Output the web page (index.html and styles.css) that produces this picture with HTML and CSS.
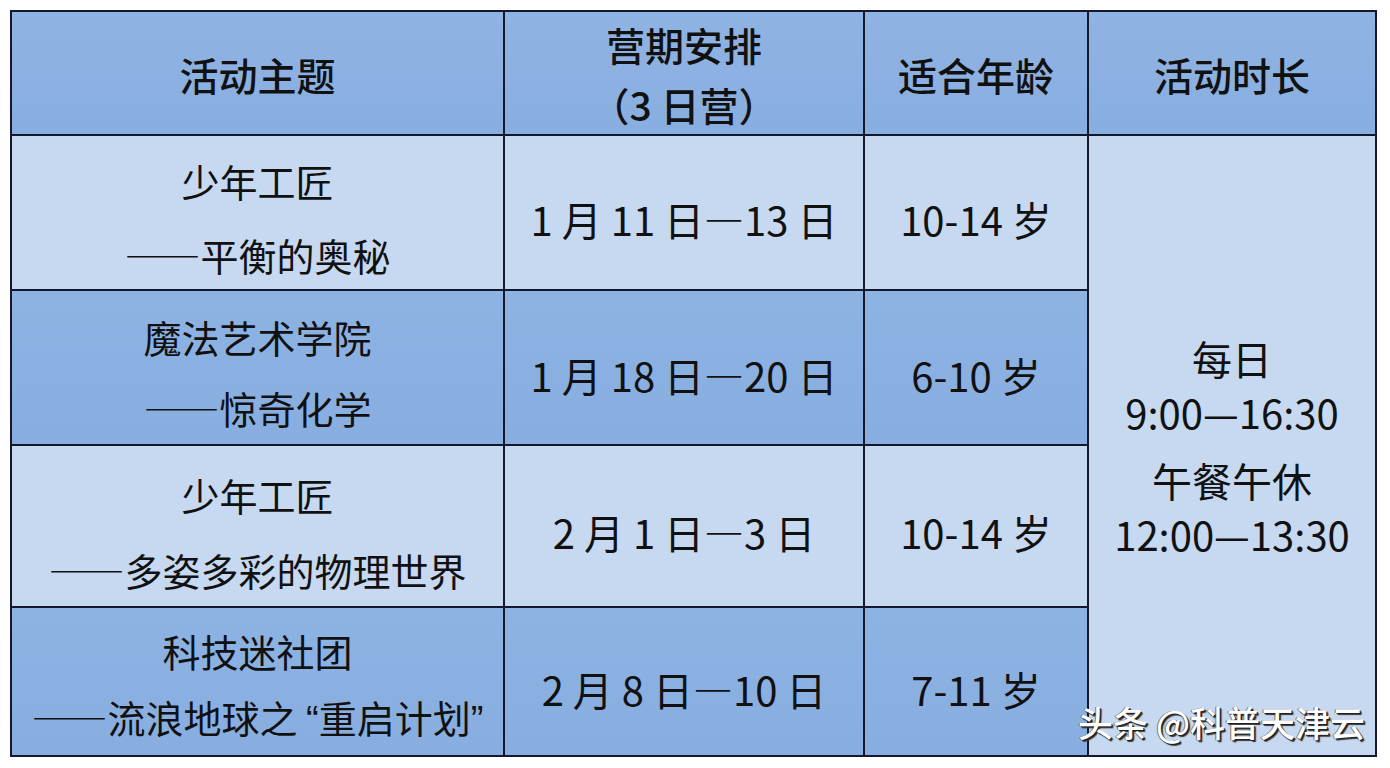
FILE: index.html
```html
<!DOCTYPE html>
<html lang="zh-CN">
<head>
<meta charset="utf-8">
<title>活动安排</title>
<link rel="stylesheet" href="styles.css">
</head>
<body>
<div class="wrap">
  <table class="schedule">
    <colgroup>
      <col class="c1"><col class="c2"><col class="c3"><col class="c4">
    </colgroup>
    <tr class="head">
      <th>活动主题</th>
      <th><div class="hl">营期安排</div><div class="hl">（3 日营）</div></th>
      <th>适合年龄</th>
      <th>活动时长</th>
    </tr>
    <tr class="r1 light">
      <td class="topic"><div>少年工匠</div><div>——平衡的奥秘</div></td>
      <td class="num">1 月 11 日—13 日</td>
      <td class="num">10-14 岁</td>
      <td class="time" rowspan="4">
        <div class="tgroup"><div>每日</div><div>9:00—16:30</div></div>
        <div class="tgroup"><div>午餐午休</div><div>12:00—13:30</div></div>
      </td>
    </tr>
    <tr class="r2 dark">
      <td class="topic"><div>魔法艺术学院</div><div>——惊奇化学</div></td>
      <td class="num">1 月 18 日—20 日</td>
      <td class="num">6-10 岁</td>
    </tr>
    <tr class="r3 light">
      <td class="topic"><div>少年工匠</div><div>——多姿多彩的物理世界</div></td>
      <td class="num">2 月 1 日—3 日</td>
      <td class="num">10-14 岁</td>
    </tr>
    <tr class="r4 dark">
      <td class="topic"><div>科技迷社团</div><div>——流浪地球之 <span class="q">“</span>重启计划<span class="q">”</span></div></td>
      <td class="num">2 月 8 日—10 日</td>
      <td class="num">7-11 岁</td>
    </tr>
  </table>
  <div class="watermark">头条 @科普天津云</div>
</div>
</body>
</html>
```

FILE: styles.css
```css
html, body {
  margin: 0;
  padding: 0;
  background: #ffffff;
}
body {
  font-family: "Noto Sans CJK SC", "Noto Sans", sans-serif;
  color: #111111;
}
.wrap {
  position: relative;
  width: 1366px;
  padding: 10px 0 0 10px;
}
.schedule {
  border-collapse: collapse;
  table-layout: fixed;
  width: 1365px;
}
.c1 { width: 493px; }
.c2 { width: 360px; }
.c3 { width: 224px; }
.c4 { width: 288px; }
.schedule th, .schedule td {
  border: 2px solid #15182a;
  text-align: center;
  vertical-align: middle;
  padding: 0;
  font-size: 38px;
  font-weight: 400;
}
.schedule th {
  background: linear-gradient(#8fb4e3, #88ade0);
  font-weight: 500;
  font-size: 39px;
  line-height: 60px;
}
.head { height: 123px; }
.head th { padding-top: 2px; }
.r1 { height: 155px; }
.r2 { height: 155px; }
.r3 { height: 162px; }
.r4 { height: 149px; }
.light td { background: #c6d9f1; }
.dark td { background: linear-gradient(#8db3e3, #88aee1); }
.schedule td.topic {
  line-height: 44px;
  padding-top: 10px;
}
.topic div + div { margin-top: 30px; }
.schedule .r2 td.topic { padding-top: 9px; }
.r2 .topic div + div { margin-top: 27px; }
.schedule .r3 td.topic { padding-top: 12px; }
.r3 .topic div + div { margin-top: 31px; }
.schedule .r4 td.topic { padding-top: 8px; }
.r4 .topic div + div { margin-top: 22px; }
.q {
  font-family: "Liberation Sans", sans-serif;
}
.schedule td.num {
  font-size: 40px;
  padding-top: 12px;
}
.schedule .r2 td.num,
.schedule .r4 td.num { padding-top: 14px; }
.schedule td.time {
  background: #c6d9f1;
  font-size: 40px;
  line-height: 54px;
}
.tgroup + .tgroup { margin-top: 14px; }
.watermark {
  position: absolute;
  right: 11px;
  bottom: 10px;
  font-size: 35px;
  font-weight: 500;
  color: #ffffff;
  text-shadow: 1px 1px 0 #222, 2px 2px 1px #333, -1px 0 0 #777;
}
```
